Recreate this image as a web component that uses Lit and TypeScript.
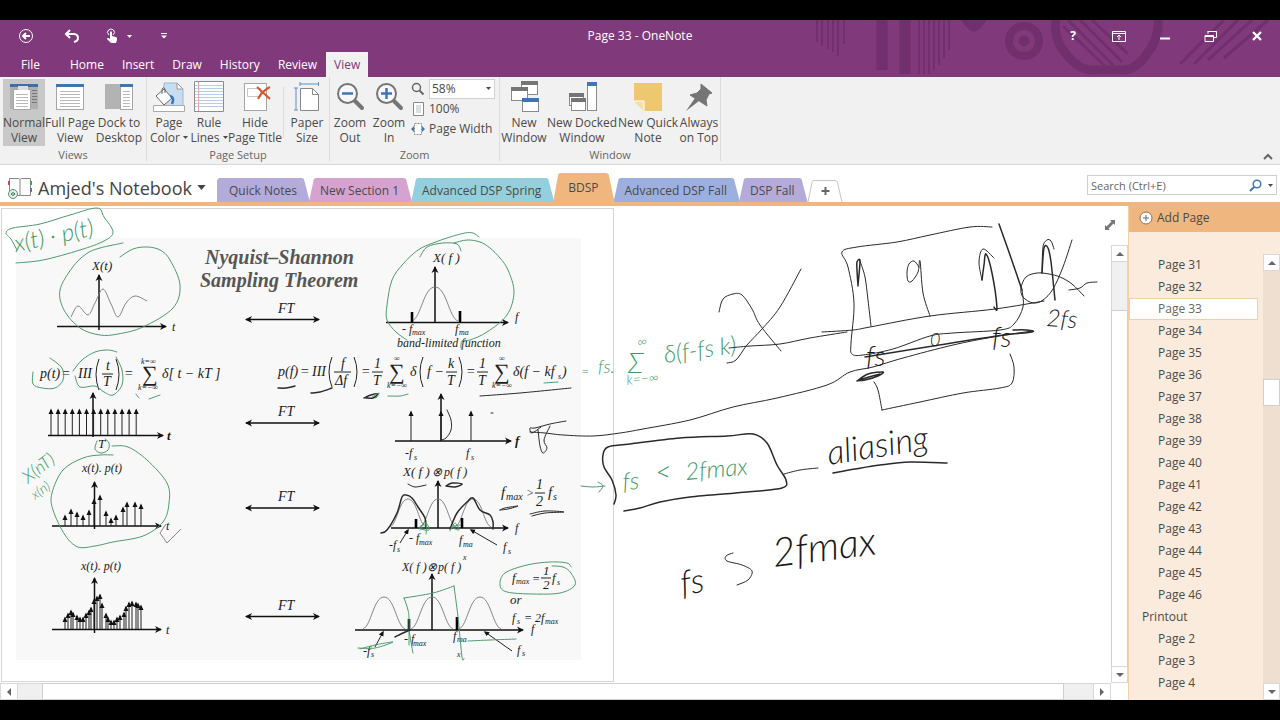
import { LitElement, html, svg, css } from "lit";
import { customElement, state } from "lit/decorators.js";
import { classMap } from "lit/directives/class-map.js";

type Pt = [number, number];

/** Turns "x,y x,y ..." into a list of points. */
const points = (s: string): Pt[] => s.trim().split(/\s+/).map((p) => p.split(",").map(Number) as Pt);

/** Smooth curve through every point (Catmull-Rom to Bezier). */
const smooth = (s: string): string => {
  const p = points(s);
  let d = `M${p[0][0]} ${p[0][1]}`;
  for (let i = 0; i < p.length - 1; i++) {
    const a = p[i - 1] ?? p[i];
    const b = p[i];
    const c = p[i + 1];
    const e = p[i + 2] ?? c;
    d += `C${b[0] + (c[0] - a[0]) / 6} ${b[1] + (c[1] - a[1]) / 6} ${c[0] - (e[0] - b[0]) / 6} ${c[1] - (e[1] - b[1]) / 6} ${c[0]} ${c[1]}`;
  }
  return d;
};

const stroke = (kind: string) => (pts: string) => svg`<path class=${kind} d=${smooth(pts)}></path>`;
const pen = stroke("ink");
const thick = stroke("ink heavy");
const green = stroke("ink green");
const curve = stroke("curve");
const label = (x: number, y: number, text: string, cls = "m13") => svg`<text class=${cls} x=${x} y=${y}>${text}</text>`;
const note = (x: number, y: number, text: string, angle: number, cls: string) =>
  svg`<text class="hand ${cls}" transform="translate(${x} ${y}) rotate(${angle})">${text}</text>`;
const rule = (x1: number, x2: number, y: number) => svg`<path class="thin" d="M${x1} ${y}H${x2}"></path>`;
const bar = (x: number, y1: number, y2: number) => svg`<path class="bar" d="M${x} ${y1}V${y2}"></path>`;
const axis = (x1: number, y1: number, x2: number, y2: number) =>
  svg`<path class="axis" d="M${x1} ${y1}L${x2} ${y2}" marker-end="url(#head)"></path>`;
const pointer = (x1: number, y1: number, x2: number, y2: number) =>
  svg`<path class="thin" d="M${x1} ${y1}L${x2} ${y2}" marker-end="url(#tip)"></path>`;
const stem = (x: number, top: number, base: number) =>
  svg`<path class="thin" d="M${x} ${base}V${top + 1}" marker-end="url(#tip)"></path>`;
const paren = (x: number, y1: number, y2: number, dir: number) =>
  svg`<path class="thin" d="M${x} ${y1}Q${x - 6 * dir} ${(y1 + y2) / 2} ${x} ${y2}"></path>`;
const transform = (y: number) => svg`
  <path class="axis" d="M282 ${y}H246" marker-end="url(#head)"></path>
  <path class="axis" d="M282 ${y}H319" marker-end="url(#head)"></path>
  ${label(278, y - 7, "FT", "m14")}`;

const SPARSE = "65,515 71,509 77,512 83,515 89,510 94,499 100,495 106,511 111,518 116,515 123,507 127,502 135,502 141,504";
const DENSE =
  "65,617 68,613 71,610 73,612 77,615 80,617 83,617 86,613 89,610 91,607 94,599 97,596 100,594 102,603 106,613 108,617 111,620 114,620 117,617 120,615 124,612 126,606 129,602 132,601 136,602 138,603 141,605";

@customElement("note-canvas")
class NoteCanvas extends LitElement {
  static styles = css`
    :host { display: block; overflow: hidden; background: #fff; }
    svg { display: block; }
    text { font-family: "Liberation Serif", serif; font-style: italic; fill: #1c1c1c; }
    .m8 { font-size: 8px; }
    .m10 { font-size: 10px; }
    .m12 { font-size: 12px; }
    .m13 { font-size: 13px; }
    .m14 { font-size: 14px; }
    .m15 { font-size: 15px; }
    .sum { font-size: 22px; font-style: normal; }
    .title { font-size: 20px; font-weight: bold; fill: #565656; }
    .strong { font-size: 13px; font-weight: bold; }
    .hand { font-family: Lato, "Open Sans", sans-serif; font-weight: 300; fill: #1a1a1a; }
    .leaf { fill: #3f9a68; }
    .h14 { font-size: 14px; }
    .h18 { font-size: 18px; }
    .h24 { font-size: 24px; }
    .h28 { font-size: 28px; }
    .h34 { font-size: 34px; }
    .h40 { font-size: 40px; }
    .ink, .curve, .axis, .thin, .bar { fill: none; }
    .ink { stroke: #2a2a2a; stroke-width: 1; stroke-linecap: round; stroke-linejoin: round; }
    .heavy { stroke-width: 1.5; }
    .green { stroke: #4d9a6e; stroke-width: 1; }
    .curve { stroke: #777; stroke-width: 0.9; }
    .axis { stroke: #111; stroke-width: 1.5; }
    .thin { stroke: #222; stroke-width: 1; }
    .bar { stroke: #000; stroke-width: 2.6; }
    .sheet { fill: #fff; stroke: #d4d4d4; }
    .slide { fill: #f8f8f8; }
  `;

  render() {
    return html`<svg width="1111" height="476" viewBox="0 207 1111 476" role="img" aria-label="Sampling theorem notes">
      <defs>
        <marker id="head" markerUnits="userSpaceOnUse" markerWidth="8" markerHeight="8" refX="6" refY="4" orient="auto">
          <path d="M0 0.5L7 4L0 7.5L2 4Z" fill="#111"></path>
        </marker>
        <marker id="tip" markerUnits="userSpaceOnUse" markerWidth="6" markerHeight="6" refX="4" refY="3" orient="auto">
          <path d="M0 0.5L5.5 3L0 5.5Z" fill="#111"></path>
        </marker>
      </defs>
      <rect class="sheet" x="1.5" y="208.5" width="612" height="473"></rect>
      <rect class="slide" x="16" y="238" width="565" height="422"></rect>
      ${label(205, 264, "Nyquist–Shannon", "title")} ${label(200, 287, "Sampling Theorem", "title")}
      ${[319.5, 423, 508, 616.5].map(transform)} ${this.signals()} ${this.spectra()} ${this.inkLeft()} ${this.inkRight()}
    </svg>`;
  }

  private signals() {
    return svg`
      ${axis(57, 326.5, 166, 326.5)} ${axis(99, 330, 99, 275)} ${label(92, 270, "X(t)")} ${label(172, 331, "t", "m12")}
      ${curve("71,317 78,306 88,315 95,303 103,289 111,304 118,317 126,303 135,296 147,301")}
      ${label(40, 378, "p(t)", "m14")} ${label(61, 378, "=", "m14")} ${label(78, 378, "III", "m14")}
      ${paren(99, 359, 390, 1)} ${label(106, 370, "t", "m14")} ${rule(102, 113, 374)} ${label(103, 386, "T", "m14")}
      ${paren(116, 359, 390, -1)} ${label(124, 378, "=", "m14")} ${label(142, 381, "∑", "sum")}
      ${label(141, 364, "k=∞", "m8")} ${label(138, 390, "k=−∞", "m8")} ${label(162, 378, "δ[ t − kT ]", "m14")}
      ${axis(48, 435.5, 163, 435.5)} ${axis(93, 437, 93, 393)}
      ${Array.from({ length: 13 }, (_, i) => stem(51 + i * 7.1, 409, 435))}
      ${label(167, 440, "t", "strong")} ${label(98, 448, "T")}
      ${label(82, 472, "x(t). p(t)", "m12")} ${axis(52, 526, 161, 526)} ${axis(94.5, 529, 94.5, 482)}
      ${points(SPARSE).map(([x, y]) => stem(x, y, 526))} ${label(166, 530, "t", "m12")}
      ${label(81, 570, "x(t). p(t)", "m12")} ${axis(52, 629.5, 161, 629.5)} ${axis(94.5, 633, 94.5, 578)}
      ${points(DENSE).map(([x, y]) => stem(x, y, 629))} ${label(166, 634, "t", "m12")}`;
  }

  private spectra() {
    const bell = (c: number, w: number, top: number, base: number) => {
      const h = base - top;
      return svg`<path class="curve" d="M${c - w} ${base}C${c - w * 0.6} ${base - h * 0.1} ${c - w * 0.5} ${top} ${c} ${top}C${c + w * 0.5} ${top} ${c + w * 0.6} ${base - h * 0.1} ${c + w} ${base}"></path>`;
    };
    return svg`
      ${label(433, 262, "X( f )")} ${axis(386, 322.5, 508, 322.5)} ${axis(435, 322, 435, 267)} ${bell(435, 23, 287, 321)}
      ${bar(412, 312, 322)} ${bar(460, 311, 322)} ${label(515, 321, "f", "m12")}
      ${label(402, 333, "- f", "m12")} ${label(412, 335, "max", "m8")} ${label(455, 333, "f", "m12")} ${label(459, 335, "ma", "m8")}
      ${label(397, 347, "band-limited function", "m12")}

      ${label(278, 376, "p(f)", "m14")} ${label(300, 376, "=", "m14")} ${label(312, 376, "III", "m14")}
      ${paren(332, 357, 387, 1)} ${label(341, 368, "f", "m14")} ${rule(334, 351, 372)} ${label(335, 385, "Δf", "m14")} ${paren(354, 357, 387, -1)}
      ${label(361, 376, "=", "m14")} ${label(374, 368, "1", "m14")} ${rule(372, 383, 372)} ${label(373, 385, "T", "m14")}
      ${label(389, 379, "∑", "sum")} ${label(394, 361, "∞", "m8")} ${label(387, 388, "k=−∞", "m8")}
      ${label(410, 376, "δ", "m14")} ${paren(423, 357, 387, 1)} ${label(427, 376, "f −", "m14")}
      ${label(448, 368, "k", "m14")} ${rule(446, 457, 372)} ${label(447, 385, "T", "m14")} ${paren(459, 357, 387, -1)}
      ${label(466, 376, "=", "m14")} ${label(479, 368, "1", "m14")} ${rule(477, 488, 372)} ${label(478, 385, "T", "m14")}
      ${label(494, 379, "∑", "sum")} ${label(499, 361, "∞", "m8")} ${label(492, 388, "k=−∞", "m8")}
      ${label(513, 376, "δ(f − kf", "m14")} ${label(558, 379, "s", "m8")} ${label(562, 376, ")", "m14")}

      ${axis(395, 441, 511, 441)} ${axis(441, 441, 441, 394)} ${[411, 441, 471].map((x) => stem(x, 411, 441))}
      ${label(515, 445, "f", "strong")} ${label(405, 457, "-f", "m12")} ${label(414, 460, "s", "m8")} ${label(466, 457, "f", "m12")} ${label(471, 460, "s", "m8")}

      ${label(403, 476, "X( f )")} ${label(432, 476, "⊗", "m12")} ${label(444, 476, "p( f )", "m12")}
      ${axis(391, 528, 508, 528)} ${axis(438, 528, 438, 481)} ${[408, 438, 473].map((c) => bell(c, 18, 499, 527))}
      ${bar(416, 519, 528)} ${bar(462, 518, 528)} ${label(515, 532, "f", "m12")}
      ${label(389, 549, "-f", "m12")} ${label(397, 552, "s", "m8")} ${label(409, 542, "- f", "m12")} ${label(419, 545, "max", "m8")}
      ${label(459, 544, "f", "m12")} ${label(463, 547, "ma", "m8")} ${label(463, 560, "x", "m8")} ${label(503, 551, "f", "m12")} ${label(508, 554, "s", "m8")}
      ${pointer(400, 543, 408, 530)} ${pointer(497, 545, 471, 530)}
      ${label(501, 497, "f", "m15")} ${label(506, 500, "max", "m10")} ${label(526, 497, ">", "m12")} ${label(536, 489, "1", "m14")}
      ${rule(535, 545, 493)} ${label(536, 506, "2", "m14")} ${label(548, 497, "f", "m15")} ${label(553, 500, "s", "m10")}

      ${label(402, 571, "X( f )", "m12")} ${label(427, 571, "⊗", "m12")} ${label(438, 571, "p( f )", "m12")}
      ${axis(355, 630, 523, 630)} ${axis(432, 630, 432, 574)} ${[384, 432, 480].map((c) => bell(c, 21, 597, 629))}
      ${bar(409, 619, 630)} ${bar(457, 617, 630)} ${label(531, 633, "f", "m12")}
      ${label(363, 655, "-f", "m12")} ${label(371, 657, "s", "m8")} ${label(404, 643, "- f", "m12")} ${label(413, 646, "max", "m8")}
      ${label(453, 640, "f", "m12")} ${label(457, 642, "ma", "m8")} ${label(457, 657, "x", "m8")} ${label(517, 654, "f", "m12")} ${label(522, 656, "s", "m8")}
      ${pointer(375, 647, 383, 632)} ${pointer(512, 651, 485, 632)}
      ${label(512, 582, "f")} ${label(516, 584, "max", "m8")} ${label(532, 583, "=", "m12")} ${label(543, 575, "1")}
      ${rule(541, 551, 578)} ${label(543, 589, "2")} ${label(552, 582, "f")} ${label(557, 585, "s", "m8")}
      ${label(510, 604, "or")} ${label(512, 622, "f", "m12")} ${label(517, 624, "s", "m8")} ${label(524, 622, "= 2f", "m12")} ${label(545, 624, "max", "m8")}`;
  }

  private inkLeft() {
    return svg`
      ${green("17,250 11,239 6,233 13,228 40,224 70,215 97,208 104,217 113,232 104,241 80,250 43,260 16,263")}
      ${note(16, 252, "x(t) · p(t)", -12, "leaf h24")}
      ${green("120,257 133,249 147,247 160,250 170,260 180,285 173,308 143,327 118,334 100,335 80,328 64,310 60,290 72,268 86,254 100,248 123,243")}
      ${green("33,372 33,384 42,388 55,388 63,380 62,368 50,358")} ${green("73,371 82,360 95,352 108,350 117,352")}
      ${green("75,376 80,387 95,386 104,392 113,395 122,385 122,370 116,357")} ${green("136,394 139,398")} ${green("149,399 160,395")}
      ${green("407,340 396,332 387,320 387,305 392,280 403,264 418,250 433,243 450,237 465,233 473,233 479,237")}
      ${green("420,257 427,247 443,243 457,244 461,251")}
      ${green("454,243 467,240 480,242 490,248 500,258 508,270 514,292 507,315 487,332 470,340 462,341 461,348")}
      ${thick("311,393 320,392 332,388")} ${thick("278,388 286,388 295,386")} ${thick("364,398 371,395 378,394 373,398 366,398")}
      ${green("372,397 379,393 376,398")}
      ${green("388,396 400,396 408,394")} ${pen("480,396 520,393 571,388")} ${green("544,383 558,382")}
      ${pen("447,410 451,420 451,430 446,438 441,440")} ${pen("491,413 493,413")}
      ${green("97,441 95,449 101,453 108,450 109,443 105,439")}
      ${note(28, 484, "X(nT)", -38, "leaf h18")} ${note(35, 500, "x(n)", -35, "leaf h14")}
      ${green("112,446 128,447 147,460 167,483 169,503 163,522 143,536 113,542 95,546 78,547 65,535 53,510 52,493 63,470 83,458 100,455 113,455")}
      ${svg`<path class="curve" d="M166 524L160 533L167 543L181 529"></path>`}
      ${pen("408,484 415,487 426,485")} ${thick("446,486 455,487 462,484 452,483 446,486")}
      ${thick("381,533 387,530 397,513 402,497 406,495 412,498 418,507 425,518 426,528")}
      ${thick("450,529 457,513 467,502 473,498 480,510 490,515 493,522 493,529")}
      ${green("420,530 425,522 429,530 419,528 426,524 426,534")} ${green("450,531 455,523 459,530 452,527 460,525")}
      ${pen("500,510 508,509 518,506 505,508 500,510")} ${pen("530,514 545,511 564,512 545,513 532,516")}
      ${green("409,645 409,620 408,610 404,598")} ${green("404,598 433,593 454,586")} ${green("454,586 458,617 462,657 464,658")}
      ${green("413,653 411,642 409,630")} ${green("358,648 375,648 393,642 375,645 360,649")} ${green("468,641 490,640 516,639")}
      ${thick("395,637 403,633 410,630")}
      ${green("571,567 567,563 550,562 527,565 505,573 500,585 507,592 533,594 560,593 575,585 571,573 563,567 552,566")}
      ${green("581,486 593,487 605,486")} ${green("598,482 603,486 599,492")}`;
  }

  private inkRight() {
    return svg`
      ${note(581, 376, "=", 0, "leaf h14")} ${note(598, 373, "fs.", 0, "leaf h18")} ${note(628, 373, "Σ", 0, "leaf h28")}
      ${note(638, 347, "∞", -8, "leaf h14")} ${note(627, 385, "k=−∞", -6, "leaf h14")} ${note(665, 363, "δ(f-fs k)", -8, "leaf h24")}
      ${note(623, 490, "fs", -4, "leaf h24")} ${note(656, 482, "<", -4, "leaf h28")} ${note(686, 480, "2fmax", -5, "leaf h24")}
      ${pen("566,421 550,424 535,428 530,428 532,433 541,427")} ${pen("538,430 540,446 543,453 547,448 544,440 550,426")}
      ${pen("530,432 545,433 563,435 593,436 620,433 643,429 690,420 733,407 777,398 827,385 850,372 873,367 903,358 953,345 993,337 1032,331")}
      ${thick("614,504 616,495 612,480 604,467 603,455 608,447 630,444 680,438 727,436 753,434 767,443 777,465 786,480 782,488 747,492 690,497 660,502 640,508 624,511")}
      ${pen("784,474 800,470 818,468")} ${note(829, 465, "aliasing", -9, "h34")} ${thick("833,473 855,469 880,465 910,462 947,463")}
      ${note(682, 595, "fs", -8, "h34")} ${pen("733,553 726,556 727,561 742,565 752,571 748,580 737,585")} ${note(774, 567, "2fmax", -7, "h40")}
      ${pen("719,312 723,299 733,294 742,295 752,309 760,325 781,351")} ${pen("801,269 780,307 762,329 747,345 736,360 727,363")}
      ${pen("729,348 750,346 780,344 810,338 847,332")} ${pen("822,332 853,330 870,327 930,316 995,309 1044,301")}
      ${pen("992,227 970,227 930,235 897,242 857,247 842,252 848,267 854,303 851,343 852,354 863,355 893,349 930,336 953,333 1000,330 1014,324 1023,307 1022,290")}
      ${thick("999,224 1010,255 1022,290")} ${thick("865,357 933,346 997,336 1032,332 1026,330 1013,330")}
      ${thick("858,286 857,270 857,262 860,261 858,285")} ${pen("860,261 865,277 868,300 871,326")}
      ${pen("919,267 914,261 909,264 907,272 908,281 912,281 918,272 920,261 923,293 930,316")}
      ${pen("982,280 979,262 983,249 994,258")} ${thick("982,280 984,265 986,254 992,273 997,308 994,307")}
      ${pen("1042,273 1043,247 1047,240 1051,241 1054,249")} ${thick("1042,273 1044,248 1048,248 1051,262 1055,300")}
      ${pen("1084,296 1072,284 1060,277 1049,274 1037,273 1026,277 1021,288 1023,297 1033,303 1043,300 1053,289 1063,267 1072,240")}
      ${pen("1069,290 1080,288 1087,283 1097,282")} ${note(1046, 326, "2fs", 4, "h24")}
      ${note(866, 366, "fs", 0, "h28")} ${note(930, 346, "0", 0, "h18")} ${note(992, 347, "fs", 0, "h28")}
      ${thick("857,381 868,374 883,372 878,376 865,380 859,380 880,374")}
      ${pen("874,382 878,390 882,410")} ${pen("882,410 920,402 963,393 1000,388 1012,383 1014,367 1010,354")}`;
  }
}

/* ---------- Ribbon icons, all drawn on a 32px grid ---------- */
const lines = (x: number, y: number, w: number, n: number, gap: number, color = "#b9b9b9") =>
  svg`${Array.from({ length: n }, (_, i) => svg`<path d="M${x} ${y + i * gap}h${w}" stroke=${color}></path>`)}`;
const sheet = (x: number, y: number, w: number, h: number) =>
  svg`<rect x=${x + 0.5} y=${y + 0.5} width=${w} height=${h} fill="#fff" stroke="#a6a6a6"></rect>`;
const win = (x: number, y: number, w: number, h: number, color = "#757575") => svg`
  <rect x=${x + 0.5} y=${y + 0.5} width=${w} height=${h} fill="#fff" stroke="#8a8a8a"></rect>
  <rect x=${x} y=${y} width=${w + 1} height="4" fill=${color}></rect>`;
const lens = (plus: boolean) => svg`
  <path d="M20 20L28 28" stroke="#757575" stroke-width="4" stroke-linecap="round"></path>
  <circle cx="13.500" cy="13.500" r="9.500" fill="#f7f7f7" stroke="#757575" stroke-width="2"></circle>
  <path d=${plus ? "M8 13.500h11M13.500 8v11" : "M8 13.500h11"} stroke="#3e76b5" stroke-width="2.500"></path>`;

const ICONS: Record<string, unknown> = {
  normal: svg`<path d="M2 5h28v24H2z" fill="#b0b0b0"></path><path d="M2 5.500h28" stroke="#3e6ea8" stroke-width="3"></path>
    ${sheet(5, 9, 17, 20)}<path d="M10 6h10v4H10z" fill="#dcdcdc"></path>${lines(8, 14.5, 12, 5, 3)}${lines(24, 10.5, 5, 5, 3, "#777")}`,
  full: svg`${sheet(2, 5, 27, 24)}<path d="M2 5.500h28" stroke="#3e76b5" stroke-width="3"></path>${lines(6, 11.5, 20, 6, 3)}`,
  dock: svg`<path d="M2 4h15v25H2z" fill="#b3b3b3"></path>${sheet(17, 5, 12, 24)}<path d="M17 5.500h13" stroke="#3e76b5" stroke-width="3"></path>
    ${lines(20, 11.5, 7, 6, 3)}`,
  color: svg`<path d="M11 3h13l6 6v17H11z" fill="#c9ddf0" stroke="#9bb9d6"></path><path d="M24 3v6h6z" fill="#fff" stroke="#999"></path>
    <path d="M3 16l8-7 8 9-8 7z" fill="#fff" stroke="#666"></path><path d="M9 14V9q2-3 3 0v4" fill="none" stroke="#666"></path>
    <path d="M17 16q5 1 2 8" fill="none" stroke="#3e76b5" stroke-width="2.500"></path><path d="M.5 25.500h31v6H.5z" fill="#fff" stroke="#aaa"></path>`,
  rule: svg`<path d="M1.500 1.500h29v30h-29z" fill="#fff" stroke="#8d8d8d"></path>${lines(2, 5.5, 28, 8, 3, "#b8cdea")}
    <path d="M5.500 2v29" stroke="#e8a8b0"></path>`,
  hide: svg`${sheet(5, 3, 22, 27)}<path d="M8.500 8.500h13v8h-13z" fill="none" stroke="#c5c5c5"></path>
    <path d="M18 7l13 12M31 7q-8 4-12 12" stroke="#d6552b" stroke-width="2" fill="none"></path>`,
  paper: svg`<path d="M9.500 8.500h12l6 6v16h-18z" fill="#fff" stroke="#888"></path><path d="M21.500 8.500v6h6" fill="none" stroke="#888"></path>
    <path d="M9 4h18.500M9 2v4M27.500 2v4M5 8v22M3 8h4M3 30h4" stroke="#5a8fc4" fill="none"></path>`,
  out: lens(false),
  in: lens(true),
  newwin: svg`${win(13, 1, 16, 13)}${win(3, 7, 16, 13)}${win(14, 18, 16, 13, "#3e76b5")}`,
  docked: svg`${win(3, 13, 14, 12)}${win(5, 18, 14, 12)}${win(21, 2, 9, 28, "#3e76b5")}`,
  quick: svg`<path d="M2 3h28v28H12L2 21z" fill="#edc871"></path><path d="M2 21h10v10z" fill="#f5dfa8"></path><path d="M2 21h10v10" fill="none" stroke="#fff"></path>`,
  pin: svg`<path d="M18 4l11 9-3 1-3 6 1 6L7 15l7-2 4-4z" fill="#757575" stroke="#757575" stroke-linejoin="round"></path>
    <path d="M12 18L3 31l13-10z" fill="#757575"></path>`,
};

interface Command { icon: string; top: string; bottom: string; width: number; menu?: boolean; on?: boolean }
const VIEWS: Command[] = [
  { icon: "normal", top: "Normal", bottom: "View", width: 42, on: true },
  { icon: "full", top: "Full Page", bottom: "View", width: 50 },
  { icon: "dock", top: "Dock to", bottom: "Desktop", width: 48 },
];
const SETUP: Command[] = [
  { icon: "color", top: "Page", bottom: "Color", width: 42, menu: true },
  { icon: "rule", top: "Rule", bottom: "Lines", width: 38, menu: true },
  { icon: "hide", top: "Hide", bottom: "Page Title", width: 54 },
];
const PAPER: Command[] = [{ icon: "paper", top: "Paper", bottom: "Size", width: 42 }];
const ZOOM: Command[] = [
  { icon: "out", top: "Zoom", bottom: "Out", width: 38 },
  { icon: "in", top: "Zoom", bottom: "In", width: 40 },
];
const WINDOWS: Command[] = [
  { icon: "newwin", top: "New", bottom: "Window", width: 46 },
  { icon: "docked", top: "New Docked", bottom: "Window", width: 70 },
  { icon: "quick", top: "New Quick", bottom: "Note", width: 62 },
  { icon: "pin", top: "Always", bottom: "on Top", width: 40 },
];
const MENU = ["File", "Home", "Insert", "Draw", "History", "Review", "View"];
const SECTIONS = [
  { name: "Quick Notes", tone: "lilac" },
  { name: "New Section 1", tone: "pink" },
  { name: "Advanced DSP Spring", tone: "teal" },
  { name: "BDSP", tone: "orange" },
  { name: "Advanced DSP Fall", tone: "blue" },
  { name: "DSP Fall", tone: "lilac" },
];
const PAGES = [
  ...Array.from({ length: 16 }, (_, i) => ({ name: `Page ${31 + i}`, top: false })),
  { name: "Printout", top: true },
  ...[2, 3, 4].map((n) => ({ name: `Page ${n}`, top: false })),
];
const caret = html`<svg class="caret" width="5" height="3" viewBox="0 0 5 3"><path d="M0 0h5L2.500 3z" fill="currentColor"></path></svg>`;
const arrow = (d: string) => html`<svg width="8" height="8" viewBox="0 0 8 8"><path d=${d} fill="#666"></path></svg>`;

@customElement("app-root")
class AppRoot extends LitElement {
  @state() private page = "Page 33";
  @state() private section = "BDSP";

  static styles = css`
    :host {
      display: flex; flex-direction: column; height: 100vh; box-sizing: border-box; padding: 20px 0;
      background: #000; color: #4a4a4a; font: 12px/16px "Open Sans", "Noto Sans", sans-serif; overflow: hidden;
    }
    button, input, select { font: inherit; color: inherit; border: 0; margin: 0; padding: 0; background: none; }
    svg { flex: none; }
    .chrome { position: relative; background: #80397b; color: #fff; flex: none; }
    .doodle { position: absolute; right: 0; top: 0; }
    .titlebar { position: relative; display: grid; grid-template-columns: 1fr auto 1fr; height: 32px; align-items: center; }
    .titlebar h1 { font-size: 12px; font-weight: 400; margin: 0; }
    .tools { display: flex; padding-left: 3px; }
    .controls { display: flex; justify-content: flex-end; }
    .tool { width: 46px; height: 30px; display: flex; align-items: center; justify-content: center; gap: 8px; }
    .menu { position: relative; display: flex; height: 25px; }
    .menu button { padding: 0 9px; }
    .menu button:first-child { width: 61px; text-align: center; }
    .menu .current { background: #f1f1f1; color: #80397b; padding: 0 8px; }
    .ribbon { display: flex; flex: none; background: #f1f1f1; border-bottom: 1px solid #d8d8d8; height: 87px; }
    .group { display: flex; flex-direction: column; justify-content: space-between; padding: 2px 1px 0; border-right: 1px solid #dcdcdc; margin: 0 0 3px; }
    .group.first { padding: 2px 3px 0; }
    .row { display: flex; }
    .group h2 { margin: 0; font-size: 11px; line-height: 12px; font-weight: 400; text-align: center; color: #666; }
    .command { display: flex; flex-direction: column; align-items: center; height: 67px; white-space: nowrap; }
    .command.on { background: #c8c8c8; }
    .command svg.glyph { margin: 1px 0 3px; }
    .command span { display: flex; justify-content: center; align-items: center; gap: 3px; width: 0; line-height: 15px; }
    .divider { width: 1px; background: #dcdcdc; margin: 8px 2px 8px 1px; }
    .zoomlist { display: grid; grid-template-columns: 14px 66px; gap: 0 4px; align-items: center; align-content: start; padding: 0 3px 0 2px; grid-auto-rows: 20px; }
    .zoomlist button { text-align: left; white-space: nowrap; }
    .percent { position: relative; display: flex; align-items: center; }
    .percent select { appearance: none; width: 66px; height: 20px; background: #fff; border: 1px solid #d0d0d0; padding: 0 2px; }
    .percent .caret { position: absolute; right: 4px; top: 8px; }
    .fold { margin: auto 7px 2px auto; height: 12px; display: flex; align-items: center; }
    .book { display: flex; align-items: flex-end; background: #fff; height: 37px; flex: none; }
    .notebook { display: flex; align-items: center; gap: 5px; align-self: center; width: 217px; box-sizing: border-box; padding: 8px 0 0 7px; font-size: 18px; line-height: 24px; color: #444; white-space: nowrap; }
    .notebook .caret { width: 9px; height: 5px; }
    .sections { display: flex; align-items: flex-end; }
    .section { height: 24px; padding: 2px 13px 0 11px; margin-right: -1px; white-space: nowrap; clip-path: polygon(5px 1px, 7px 0, calc(100% - 8px) 0, calc(100% - 6px) 1px, 100% 100%, 0 100%); }
    .section:first-child { padding-left: 12px; clip-path: polygon(0 2px, 2px 0, calc(100% - 8px) 0, calc(100% - 6px) 1px, 100% 100%, 0 100%); }
    .section.open { height: 29px; padding: 0 16px 0 15px; }
    .lilac { background: #b4abda; }
    .pink { background: #d6a2d0; }
    .teal { background: #93cfdc; }
    .orange { background: #f0b67f; }
    .blue { background: #9dafde; }
    .plus { display: flex; }
    .search { display: flex; align-items: center; margin: 0 3px 7px auto; width: 190px; height: 20px; box-sizing: border-box; border: 1px solid #cfcfcf; }
    .search input { flex: 1; min-width: 0; padding: 0 3px; font-size: 11px; outline: 0; height: 18px; box-sizing: border-box; }
    .search input::placeholder { color: #666; opacity: 1; }
    .search button { display: flex; align-items: center; padding: 0 3px; }
    .work { display: grid; grid-template-columns: minmax(0, 1fr) 152px; flex: 1; min-height: 0; border-top: 4px solid #f0b67f; background: #fff; }
    .editor { position: relative; display: grid; grid-template: minmax(0, 1fr) 17px / minmax(0, 1fr) 17px; padding-top: 1px; min-height: 0; }
    .expand { position: absolute; right: 12px; top: 13px; display: flex; }
    .vbar { display: flex; flex-direction: column; margin-top: 38px; background: #f0f0f0; border: 1px solid #d8d8d8; box-sizing: border-box; }
    .hbar { display: flex; background: #f0f0f0; border: 1px solid #d8d8d8; box-sizing: border-box; }
    .step { display: flex; align-items: center; justify-content: center; flex: none; width: 15px; height: 15px; background: #fff; box-shadow: 0 0 0 1px #d8d8d8; }
    .thumb { background: #fff; box-shadow: 0 0 0 1px #cfcfcf; }
    .vbar .thumb { flex: 1; margin: 50px 0 1px; }
    .hbar .thumb { flex: 1; margin: 0 31px 0 26px; }
    .hbar .step { width: 16px; }
    .pages { display: flex; flex-direction: column; min-height: 0; background: #fbebdc; border-left: 1px solid #f3cfa9; box-sizing: border-box; }
    .add { display: flex; align-items: center; gap: 4px; height: 26px; flex: none; background: #f0b67f; padding: 0 0 2px 10px; box-sizing: border-box; }
    .list { display: flex; flex: 1; min-height: 0; padding-top: 22px; }
    .items { flex: 1; list-style: none; margin: 0; padding: 0; overflow: hidden; }
    .items button { display: block; width: 100%; height: 22px; box-sizing: border-box; border: 1px solid transparent; text-align: left; padding: 0 0 0 28px; }
    .items .parent { padding-left: 12px; }
    .items .current { background: #fff; border-color: #f3cfa9; color: #666; }
    .pbar { display: flex; flex-direction: column; justify-content: space-between; width: 17px; margin-left: 5px; background: #efdfd1; padding: 1px; box-sizing: border-box; }
    .pbar .thumb { height: 25px; flex: none; margin: 110px 0 auto; }
  `;

  private command = (c: Command) => html`<button class=${classMap({ command: true, on: !!c.on })} style="width:${c.width}px">
    <svg class="glyph" width="32" height="32" viewBox="0 0 32 32" fill="none">${ICONS[c.icon]}</svg>
    <span>${c.top}</span><span>${c.bottom}${c.menu ? caret : ""}</span>
  </button>`;

  render() {
    return html`${this.header()} ${this.ribbon()} ${this.notebookBar()}
      <main class="work">
        <div class="editor">
          <note-canvas></note-canvas>
          <div class="vbar">
            <button class="step" aria-label="Scroll up">${arrow("M0 6h8L4 2z")}</button>
            <div class="thumb"></div>
            <button class="step" aria-label="Scroll down">${arrow("M0 2h8L4 6z")}</button>
          </div>
          <div class="hbar">
            <button class="step" aria-label="Scroll left">${arrow("M6 0v8L2 4z")}</button>
            <div class="thumb"></div>
            <button class="step" aria-label="Scroll right">${arrow("M2 0v8l4-4z")}</button>
          </div>
          <button class="expand" aria-label="Full page view">
            <svg width="12" height="12" viewBox="0 0 12 12"><path d="M6 1h5v5L9.500 4.500 4.500 9.500 6 11H1V6l1.500 1.500 5-5z" fill="#777"></path></svg>
          </button>
        </div>
        <aside class="pages">
          <button class="add">
            <svg width="14" height="14" viewBox="0 0 14 14"><circle cx="7" cy="7" r="6" fill="#fff" stroke="#8a7565"></circle><path d="M7 4v6M4 7h6" stroke="#666"></path></svg>
            Add Page
          </button>
          <div class="list">
            <ul class="items">
              ${PAGES.map((p) => html`<li><button class=${classMap({ parent: p.top, current: p.name === this.page })} @click=${() => (this.page = p.name)}>${p.name}</button></li>`)}
            </ul>
            <div class="pbar">
              <button class="step" aria-label="Previous pages">${arrow("M0 6h8L4 2z")}</button>
              <div class="thumb"></div>
              <button class="step" aria-label="Next pages">${arrow("M0 2h8L4 6z")}</button>
            </div>
          </div>
        </aside>
      </main>`;
  }

  private header() {
    return html`<header class="chrome">
      <svg class="doodle" width="470" height="56" viewBox="810 20 470 56" fill="none" stroke="#722f6e">
        <path d="M817 20v22M822 20v26M828 20v29M833 20v32M838 20v36M844 20v24" stroke-width="2"></path>
        <path d="M882 20v50M905 20v54" stroke-width="11"></path>
        <path d="M919 20v54M924 20v54M929 20v54M934 20v50M939 20v45M944 20v38M949 20v30" stroke-width="2"></path>
        <path d="M962 20q12 22 24 0z" fill="#722f6e"></path>
        <circle cx="1024" cy="41" r="15" stroke-width="8"></circle><circle cx="1024" cy="41" r="5" fill="#722f6e"></circle>
        <path d="M1056 20q-4 24 20 44 8 6 16 6h32q10 0 20-12 16-20 14-38" stroke-width="9"></path>
        <path d="M1063 26l42 40M1068 20l46 46M1080 20l42 42M1092 20l36 34" stroke-width="3"></path>
        <path d="M1180 64l44-44M1194 64l44-44M1208 60l44-40M1224 58l44-38" stroke-width="3"></path>
      </svg>
      <div class="titlebar">
        <div class="tools">
          <button class="tool" aria-label="Back"><svg width="16" height="16" viewBox="0 0 16 16" fill="none" stroke="#fff"><circle cx="8" cy="8" r="6.500"></circle><path d="M12 8H5M8 5L5 8l3 3" stroke-width="2"></path></svg></button>
          <button class="tool" aria-label="Undo"><svg width="16" height="16" viewBox="0 0 16 16" fill="none" stroke="#fff" stroke-width="2"><path d="M6 2L2 6l4 4M2.500 6H10q4 .5 4 4 0 3-4 4"></path></svg></button>
          <button class="tool" aria-label="Touch mode"><svg width="14" height="16" viewBox="0 0 14 16"><path d="M4 7Q1 4.500 3.500 2 6 0 8.500 2 11 4.500 8 7" fill="none" stroke="#fff"></path><path d="M5 4q1-1.500 2 0v4l4 1q1.500.5 1 3l-1 3H6L2 11q0-1.500 1.500-1L5 11z" fill="#fff"></path></svg>${caret}</button>
          <button class="tool" aria-label="Customize"><svg width="6" height="6" viewBox="0 0 6 6"><path d="M0 .5h6" stroke="#fff"></path><path d="M0 2.500h6L3 5.500z" fill="#fff"></path></svg></button>
        </div>
        <h1>Page 33 - OneNote</h1>
        <div class="controls">
          <button class="tool"><b>?</b></button>
          <button class="tool" aria-label="Ribbon display"><svg width="14" height="12" viewBox="0 0 14 12" fill="none" stroke="#fff"><path d="M.5 1.500h13v10H.5zM.5 3.500h13M7 10V5M5 7l2-2 2 2"></path></svg></button>
          <button class="tool" aria-label="Minimize"><svg width="10" height="8" viewBox="0 0 10 8"><path d="M0 6.500h10" stroke="#fff" stroke-width="2"></path></svg></button>
          <button class="tool" aria-label="Restore"><svg width="14" height="13" viewBox="0 0 14 13" fill="none" stroke="#fff"><path d="M4 4V1.500h8.500v6H10M3.500 1.500h9" ></path><path d="M1 5.500h8.500v6H1zM1 6.500h9"></path></svg></button>
          <button class="tool" aria-label="Close"><svg width="10" height="10" viewBox="0 0 10 10"><path d="M1 1l8 8M9 1L1 9" stroke="#fff" stroke-width="2.200"></path></svg></button>
        </div>
      </div>
      <nav class="menu">${MENU.map((m) => html`<button class=${classMap({ current: m === "View" })}>${m}</button>`)}</nav>
    </header>`;
  }

  private ribbon() {
    return html`<section class="ribbon">
      <div class="group first"><div class="row">${VIEWS.map(this.command)}</div><h2>Views</h2></div>
      <div class="group">
        <div class="row">${SETUP.map(this.command)}<div class="divider"></div>${PAPER.map(this.command)}</div>
        <h2>Page Setup</h2>
      </div>
      <div class="group">
        <div class="row">
          ${ZOOM.map(this.command)}
          <div class="zoomlist">
            <svg width="14" height="14" viewBox="0 0 14 14" fill="none" stroke="#666"><circle cx="5.500" cy="5.500" r="4" stroke-width="1.500"></circle><path d="M8.500 8.500l4 4" stroke-width="2"></path></svg>
            <div class="percent"><select aria-label="Zoom level"><option>58%</option><option>100%</option></select>${caret}</div>
            <svg width="14" height="16" viewBox="0 0 14 16" fill="#fff" stroke="#888"><path d="M2.500 1.500h10v13h-10z"></path><path d="M5 4h5v8H5z" fill="#ddd" stroke="none"></path></svg>
            <button>100%</button>
            <svg width="14" height="14" viewBox="0 0 14 14"><path d="M3.500 1.500h7v11h-7z" fill="#fff" stroke="#888" stroke-dasharray="2 1"></path><path d="M3 4v6L0 7zM11 4v6l3-3z" fill="#3e76b5"></path></svg>
            <button>Page Width</button>
          </div>
        </div>
        <h2>Zoom</h2>
      </div>
      <div class="group"><div class="row">${WINDOWS.map(this.command)}</div><h2>Window</h2></div>
      <button class="fold" aria-label="Collapse the ribbon"><svg width="10" height="7" viewBox="0 0 10 7"><path d="M1 6l4-4 4 4" fill="none" stroke="#666" stroke-width="2"></path></svg></button>
    </section>`;
  }

  private notebookBar() {
    return html`<nav class="book">
      <button class="notebook">
        <svg width="26" height="24" viewBox="0 0 26 24" fill="none"><path d="M2.500 2.500h9l1.500 1 1.500-1h9v17H2.500zM13 3.500v16" fill="#fff" stroke="#888"></path>
          <path d="M2 5v4" stroke="#d04a4a" stroke-width="2"></path><path d="M24 5v4" stroke="#4a9a6a" stroke-width="2"></path><path d="M24 12v4" stroke="#6a6ab0" stroke-width="2"></path>
          <circle cx="6" cy="18" r="4.500" fill="#dfeee6" stroke="#5c8f78"></circle><path d="M4 18q2-3 4 0-2 3-4 0" stroke="#356b52"></path></svg>
        Amjed's Notebook ${caret}
      </button>
      <div class="sections">
        ${SECTIONS.map((s) => html`<button class=${classMap({ section: true, [s.tone]: true, open: s.name === this.section })} @click=${() => (this.section = s.name)}>${s.name}</button>`)}
        <button class="plus" aria-label="Create a new section"><svg width="36" height="22" viewBox="0 0 36 22" fill="none"><path d="M1 22L5 2.500Q5 .5 7 .5h21q2 0 2.500 2L35 22" stroke="#c4c4c4"></path><path d="M18.500 7v8M14.500 11h8" stroke="#666" stroke-width="2"></path></svg></button>
      </div>
      <div class="search">
        <input type="search" aria-label="Search" placeholder="Search (Ctrl+E)" />
        <button aria-label="Run search"><svg width="13" height="13" viewBox="0 0 13 13" fill="none" stroke="#3e76b5"><circle cx="8" cy="5" r="3.800" stroke-width="1.500"></circle><path d="M5 8l-4 4" stroke-width="2"></path></svg></button>
        <button aria-label="Search scope">${caret}</button>
      </div>
    </nav>`;
  }
}
